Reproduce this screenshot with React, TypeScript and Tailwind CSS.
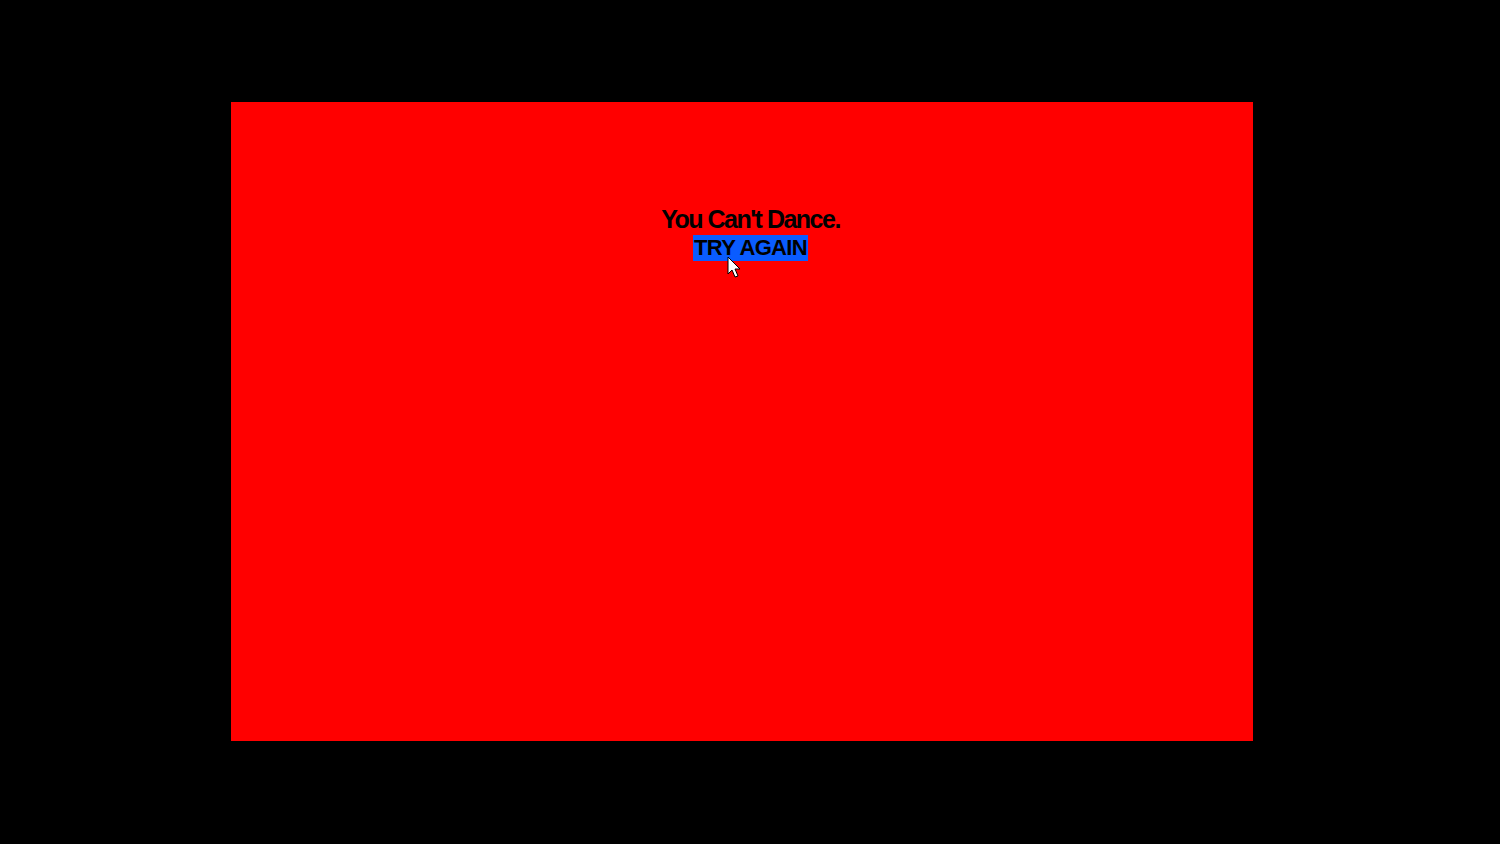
export default function App() {
  return (
    <div className="h-[844px] w-full bg-black pl-[231px] pt-[102px]" style={{ fontFamily: '"Liberation Sans", Arial, sans-serif' }}>
      <div className="relative flex h-[639px] w-[1022px] flex-col items-center bg-[#ff0000] pt-[102px] pl-[17px] text-black">
        <p className="text-[25px] font-bold leading-[31px] tracking-[-0.06em]">You Can&apos;t Dance.</p>
        <button className="bg-[#0a5cff] px-[1px] text-[22px] font-bold leading-[26px] tracking-[-0.03em]">TRY AGAIN</button>
        {/* mouse pointer */}
        <svg className="absolute left-[496px] top-[154px]" width="16" height="24" viewBox="0 0 16 24">
          <path d="M1 1 L1 18 L5 14 L8 21 L11 20 L8 13 L13 13 Z" fill="#fff" stroke="#000" strokeWidth="1" strokeLinejoin="round" />
        </svg>
      </div>
    </div>
  );
}
